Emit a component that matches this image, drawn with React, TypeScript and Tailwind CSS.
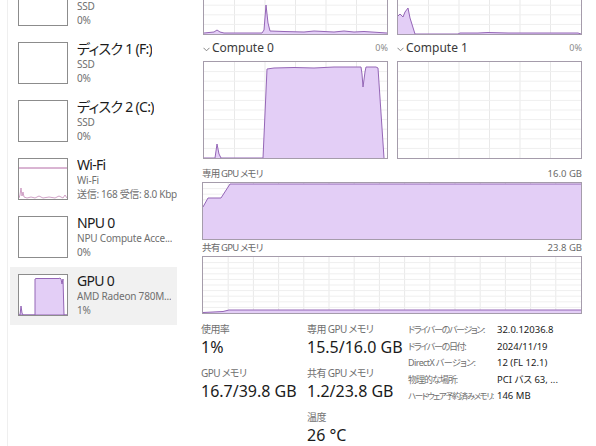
const FONT = "font-['Noto_Sans','Noto_Sans_CJK_JP',sans-serif] [font-feature-settings:'palt']";
const FILL = "#e3cef6";
const LINE = "#9466b6";

type Pt = [number, number];

function Grid({ w, h, cols, rows }: { w: number; h: number; cols: number; rows: number }) {
  const lines = [];
  for (let i = 1; i < cols; i++) {
    const x = (w / cols) * i;
    lines.push(<line key={"c" + i} x1={x} y1={0} x2={x} y2={h} stroke="#e9e9e9" strokeWidth={1} />);
  }
  for (let j = 1; j < rows; j++) {
    const y = (h / rows) * j;
    lines.push(<line key={"r" + j} x1={0} y1={y} x2={w} y2={y} stroke="#efefef" strokeWidth={1} />);
  }
  return <>{lines}</>;
}

function Graph({
  w,
  h,
  cols = 6,
  rows = 10,
  data = [],
}: {
  w: number;
  h: number;
  cols?: number;
  rows?: number;
  data?: Pt[];
}) {
  const poly = data.length ? [...data, [w, h] as Pt, [0, h] as Pt] : [];
  return (
    <div className="border border-[#a59cab] bg-white shrink-0" style={{ width: w + 2, height: h + 2 }}>
      <svg width={w} height={h} viewBox={`0 0 ${w} ${h}`} className="block">
        <Grid w={w} h={h} cols={cols} rows={rows} />
        {data.length > 0 && (
          <>
            <polygon points={poly.map((p) => p.join(",")).join(" ")} fill={FILL} />
            <polyline
              points={data.map((p) => p.join(",")).join(" ")}
              fill="none"
              stroke={LINE}
              strokeWidth={1}
            />
          </>
        )}
      </svg>
    </div>
  );
}

function Thumb({ kind }: { kind?: "wifi" | "gpu" }) {
  return (
    <div className="w-[50px] h-[42px] border border-[#8c8c8c] bg-white shrink-0">
      {kind === "gpu" && (
        <svg width={48} height={40} className="block">
          <polygon
            points="0,40 1,40 2,31 3,38 4,40 16,40 16,4 17,3.5 40,3.5 41,3 42,4 43,9 44,4 45,40 48,40"
            fill={FILL}
            stroke={LINE}
            strokeWidth={1}
          />
        </svg>
      )}
      {kind === "wifi" && (
        <svg width={48} height={40} className="block">
          <line x1={0} y1={9} x2={48} y2={9} stroke="#b46aa6" strokeWidth={1} />
          <polyline
            points="0,39 1,36 2,29 3,37 4,33 5,38 8,39 12,38 16,39 20,37 24,39 30,38 36,39 40,37 44,39 46,36 48,39"
            fill="none"
            stroke="#c48ab7"
            strokeWidth={0.8}
          />
        </svg>
      )}
    </div>
  );
}

function SideItem({
  title,
  sub,
  val,
  kind,
  selected,
}: {
  title: string;
  sub: string;
  val: string;
  kind?: "wifi" | "gpu";
  selected?: boolean;
}) {
  return (
    <div className={`h-[58px] w-[167px] flex gap-[9px] pl-[8px] pt-[7px] ${selected ? "bg-[#f1f1f1]" : ""}`}>
      <Thumb kind={kind} />
      <div className="flex flex-col overflow-hidden whitespace-nowrap min-w-0 -mt-[1px]">
        <div className="text-[14px] leading-[16px] text-[#1b1b1b] tracking-[-0.7px]">{title}</div>
        <div className="text-[10px] leading-[14px] text-[#6f6f6f] tracking-[-0.2px]">{sub}</div>
        <div className="text-[10px] leading-[14px] text-[#6f6f6f] tracking-[-0.3px]">{val}</div>
      </div>
    </div>
  );
}

function Chevron() {
  return (
    <svg width={7} height={5} viewBox="0 0 7 5" className="mt-[2px]">
      <polyline points="0.5,0.8 3.5,3.8 6.5,0.8" fill="none" stroke="#777" strokeWidth={0.9} />
    </svg>
  );
}

function ComputeLabel({ name }: { name: string }) {
  return (
    <div className="h-[26px] flex items-center justify-between">
      <div className="flex items-center gap-[2px] text-[12px] text-[#3a3a3a]">
        <Chevron />
        <span>{name}</span>
      </div>
      <span className="text-[9px] text-[#8a8a8a]">0%</span>
    </div>
  );
}

const topLeft: Pt[] = [
  [0, 95], [10, 94], [13, 92], [16, 94], [20, 95], [58, 95], [60, 92], [62, 67], [64, 85], [66, 93],
  [80, 93.5], [100, 94], [110, 93], [120, 93.5], [130, 94], [140, 93], [150, 94], [160, 93.5], [183, 95],
];
const topRight: Pt[] = [
  [0, 78], [2, 76], [5, 79], [7, 74], [10, 70], [12, 80], [17, 96], [60, 96], [62, 95], [80, 95],
  [90, 94.5], [110, 95], [150, 95], [180, 95], [183, 96],
];
const compute0: Pt[] = [
  [0, 96], [11, 96], [13, 82], [15, 92], [17, 96], [59, 96], [63, 7], [70, 6], [90, 5.5], [110, 6],
  [130, 5], [150, 5], [157, 5], [158, 12], [159, 25], [161, 10], [162, 5], [172, 5], [174, 6], [180, 96],
];
const dedicated: Pt[] = [[0, 24], [5, 15], [18, 15], [27, 1], [378, 1]];
const shared: Pt[] = [[0, 55.5], [10, 55], [20, 54.5], [26, 53], [378, 53]];

function Stat({ label, value }: { label: string; value: string }) {
  return (
    <div className="flex flex-col">
      <div className="text-[10px] leading-[14px] text-[#707070] tracking-[-0.6px]">{label}</div>
      <div className="text-[16px] leading-[22px] text-[#1b1b1b]">{value}</div>
    </div>
  );
}

const details: [string, string, string][] = [
  ["ドライバーのバージョン:", "32.0.12036.8", "text-[9px] tracking-[-1.3px]"],
  ["ドライバーの日付:", "2024/11/19", "text-[9px] tracking-[-1.3px]"],
  ["DirectX バージョン:", "12 (FL 12.1)", "text-[9px] tracking-[-0.6px]"],
  ["物理的な場所:", "PCI バス 63, ...", "text-[9px] tracking-[-1px]"],
  ["ハードウェア予約済みメモリ:", "146 MB", "text-[8.5px] tracking-[-1.4px]"],
];

export default function App() {
  return (
    <div className={`w-[596px] h-[446px] overflow-hidden bg-white flex ${FONT}`}>
      {/* Sidebar */}
      <div className="w-[190px] shrink-0 flex">
        <div className="w-[8px] border-r border-[#efefef] shrink-0" />
        <div className="flex flex-col -mt-[23px] pl-[2px]">
          <SideItem title="ディスク 0 (D:)" sub="SSD" val="0%" />
          <SideItem title="ディスク 1 (F:)" sub="SSD" val="0%" />
          <SideItem title="ディスク 2 (C:)" sub="SSD" val="0%" />
          <SideItem title="Wi-Fi" sub="Wi-Fi" val="送信: 168 受信: 8.0 Kbps" kind="wifi" />
          <SideItem title="NPU 0" sub="NPU Compute Acce..." val="0%" />
          <SideItem title="GPU 0" sub="AMD Radeon 780M..." val="1%" kind="gpu" selected />
        </div>
      </div>

      {/* Main */}
      <div className="flex-1 pl-[12px] pr-[14px] flex flex-col">
        <div className="-mt-[63px] grid grid-cols-[185px_185px] gap-x-[9px] pl-px">
          <Graph w={183} h={96} data={topLeft} />
          <Graph w={183} h={96} data={topRight} />
          <ComputeLabel name="Compute 0" />
          <ComputeLabel name="Compute 1" />
          <Graph w={183} h={96} data={compute0} />
          <Graph w={183} h={96} />
        </div>

        <div className="h-[24px] flex items-end justify-between pb-[2px] text-[9.5px] leading-[12px] text-[#6a6a6a]">
          <span className="tracking-[-0.8px]">専用 GPU メモリ</span>
          <span>16.0 GB</span>
        </div>
        <Graph w={378} h={56} cols={15} data={dedicated} />
        <div className="h-[16px] flex items-center justify-between text-[9.5px] leading-[12px] text-[#6a6a6a]">
          <span className="tracking-[-0.8px]">共有 GPU メモリ</span>
          <span>23.8 GB</span>
        </div>
        <Graph w={378} h={56} cols={15} data={shared} />

        <div className="flex pt-[8px]">
          <div className="w-[106px] flex flex-col gap-[8px] -ml-px">
            <Stat label="使用率" value="1%" />
            <Stat label="GPU メモリ" value="16.7/39.8 GB" />
          </div>
          <div className="w-[101px] flex flex-col gap-[8px]">
            <Stat label="専用 GPU メモリ" value="15.5/16.0 GB" />
            <Stat label="共有 GPU メモリ" value="1.2/23.8 GB" />
            <Stat label="温度" value="26 °C" />
          </div>
          <div className="flex flex-col text-[9.5px] leading-[16.5px] whitespace-nowrap">
            {details.map(([k, v, cls]) => (
              <div key={k} className="flex items-baseline">
                <span className={`w-[89px] text-[#707070] ${cls}`}>{k}</span>
                <span className="text-[#1b1b1b]">{v}</span>
              </div>
            ))}
          </div>
        </div>
      </div>
    </div>
  );
}
